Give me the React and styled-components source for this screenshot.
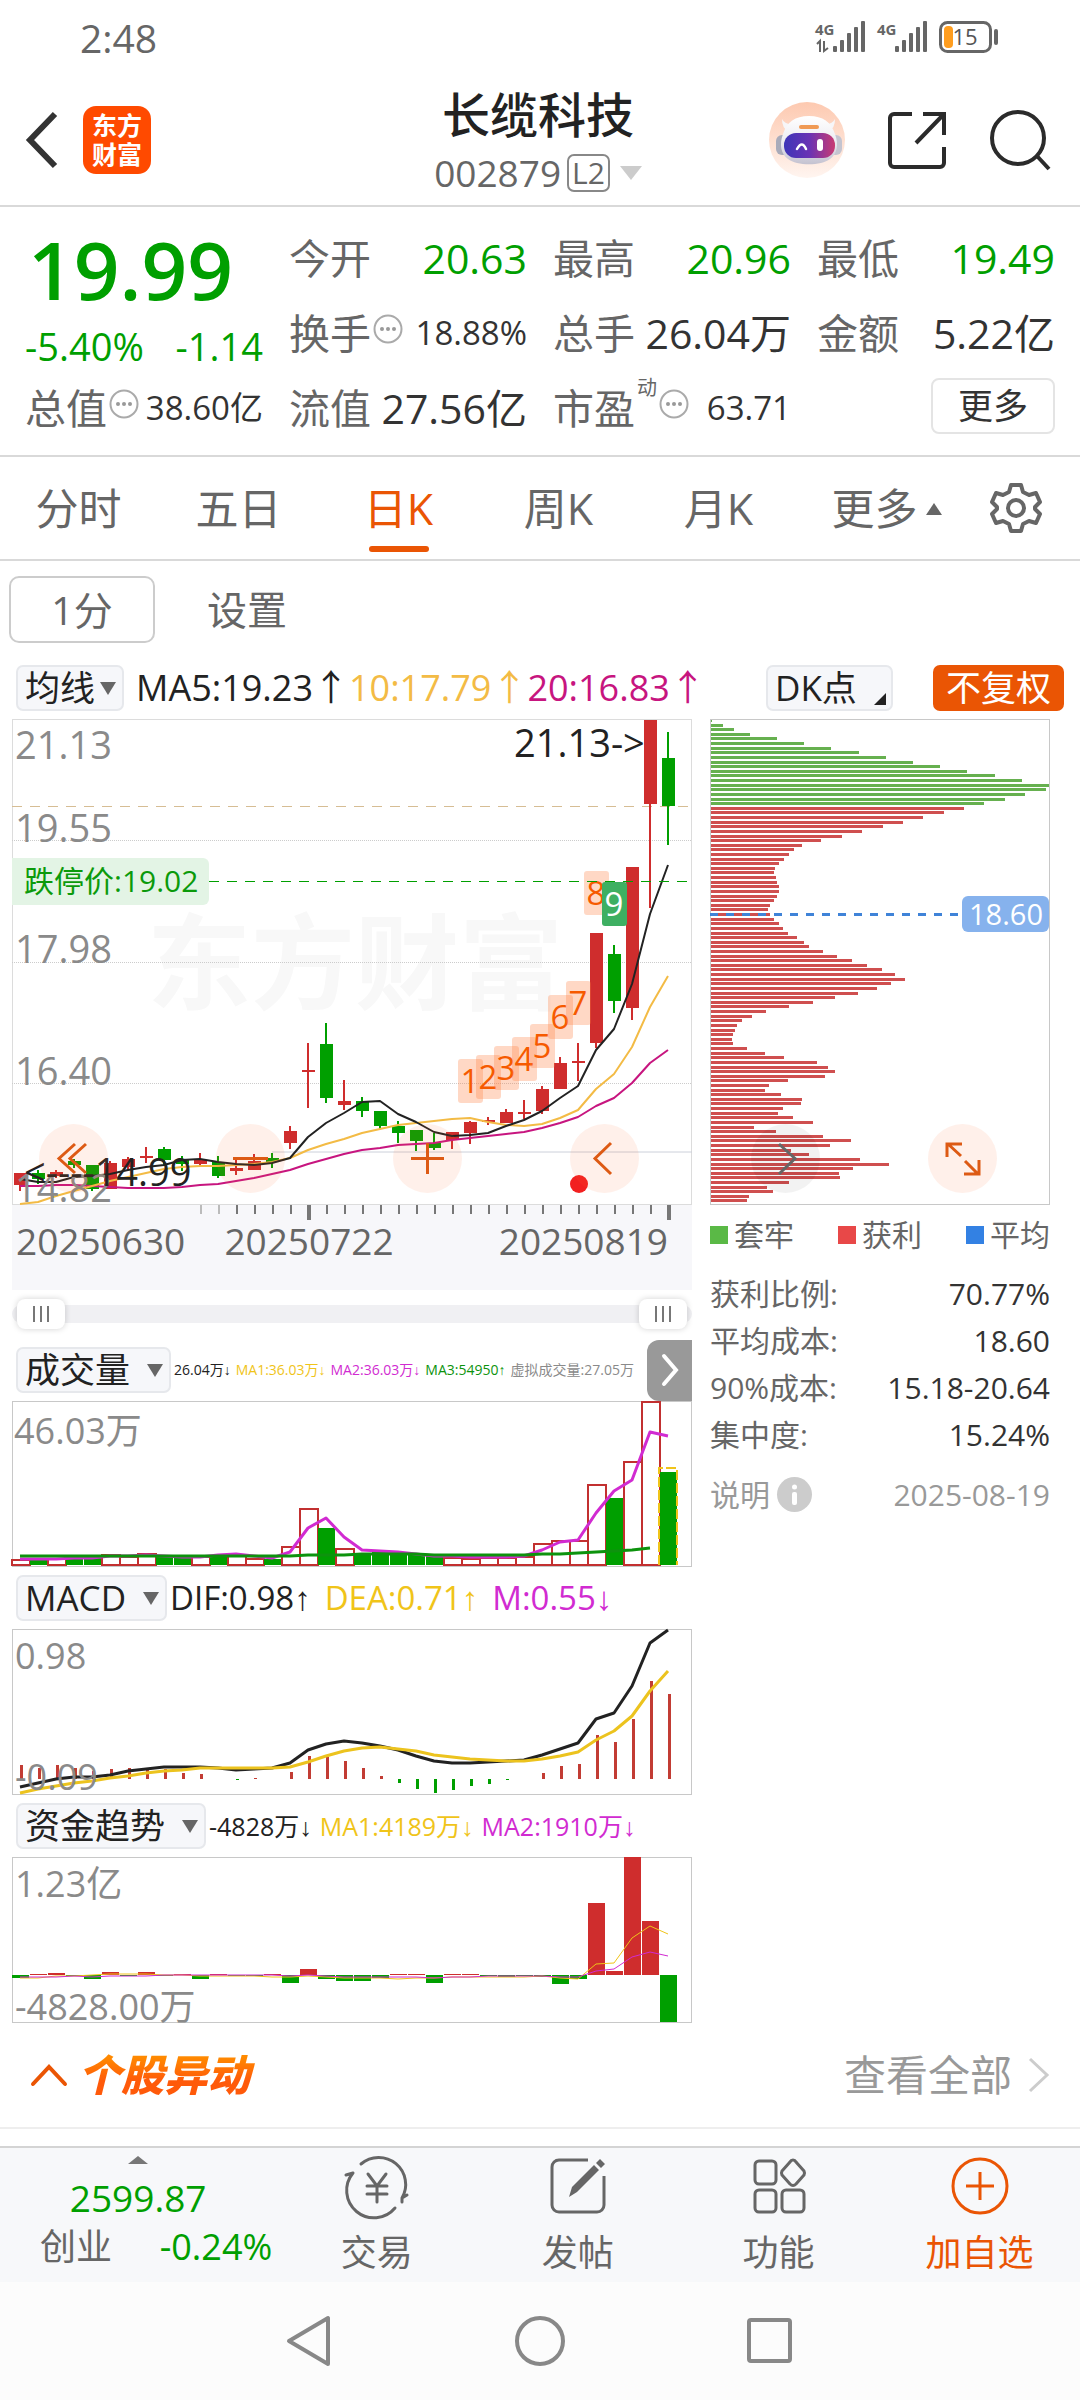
import { useState } from "react";
import styled, { createGlobalStyle } from "styled-components";

const RED = "#cf2d2d";
const GREEN = "#009f00";
const ORANGE = "#ea5504";
const YELLOW = "#f0c419";
const PURPLE = "#d12bd1";

const FONT = `"Open Sans", "Noto Sans CJK SC", sans-serif`;
const VALUE_FONT = `"Open Sans", "Liberation Sans", "Noto Sans CJK SC", sans-serif`;

const STEP = 18;
const centerOf = (i) => 8 + i * STEP;

// color, high, body top, body bottom, low
const candles = [
  ["r", 454, 454, 466, 472],
  ["g", 451, 454, 460, 465],
  ["r", 451, 453, 457, 459],
  ["g", 440, 442, 446, 449],
  ["g", 446, 446, 470, 472],
  ["r", 442, 444, 470, 470],
  ["r", 438, 440, 448, 451],
  ["r", 428, 437, 439, 444],
  ["g", 428, 430, 441, 447],
  ["g", 437, 441, 445, 452],
  ["r", 434, 441, 445, 447],
  ["g", 437, 443, 457, 459],
  ["r", 438, 449, 452, 456],
  ["r", 435, 442, 451, 451],
  ["g", 434, 439, 443, 449],
  ["r", 407, 412, 424, 430],
  ["r", 324, 351, 353, 389],
  ["g", 304, 325, 379, 384],
  ["r", 361, 382, 386, 391],
  ["g", 378, 382, 392, 398],
  ["g", 392, 392, 407, 410],
  ["g", 402, 407, 414, 424],
  ["g", 411, 411, 422, 432],
  ["g", 414, 424, 429, 431],
  ["r", 413, 413, 421, 430],
  ["r", 402, 403, 414, 425],
  ["r", 398, 401, 403, 406],
  ["r", 390, 393, 404, 404],
  ["r", 381, 393, 395, 400],
  ["r", 367, 370, 392, 395],
  ["r", 338, 344, 370, 370],
  ["r", 324, 342, 344, 362],
  ["r", 214, 214, 324, 329],
  ["g", 226, 235, 282, 294],
  ["r", 148, 148, 289, 301],
  ["r", 1, 1, 85, 189],
  ["g", 13, 39, 87, 126],
];

const ma5 = [
  460, 463, 463, 458, 457, 455, 451, 448, 446, 441, 440, 443, 445, 446, 444,
  439, 418, 404, 394, 383, 382, 395, 403, 413, 417, 416, 414, 407, 401, 392,
  379, 367, 331, 310, 265, 195, 146,
];
const ma10 = [
  485, 483, 477, 472, 467, 462, 458, 454, 450, 448, 447, 447, 446, 445, 443,
  439, 431, 425, 420, 414, 410, 406, 404, 402, 400, 399, 403, 406, 407, 405,
  399, 391, 370, 355, 328, 288, 257,
];
const ma20 = [
  467, 467, 466, 466, 467, 468, 469, 469, 469, 468, 466, 465, 462, 459, 455,
  451, 445, 440, 435, 431, 429, 426, 425, 424, 421, 419, 417, 415, 413, 409,
  404, 398, 387, 379, 364, 344, 331,
];

const tagTops = [340, 336, 327, 318, 305, 276, 262, 152, 163];

const volTops = [
  158, 158, 157, 156, 157, 153, 155, 152, 156, 157, 155, 155, 153, 157, 158,
  145, 107, 127, 147, 152, 150, 152, 154, 155, 156, 157, 156, 156, 155, 142,
  139, 139, 83, 97, 60, 0, 71,
];
const volMa = [
  158, 158, 158, 157, 157, 155, 155, 154, 155, 156, 156, 154, 153, 155, 157,
  151, 127, 117, 136, 149, 150, 151, 153, 155, 155, 156, 156, 156, 155, 149,
  141, 139, 112, 90, 79, 31, 35,
];
const volLong = [
  155, 155, 155, 155, 155, 155, 155, 155, 155, 155, 155, 155, 155, 155, 155,
  155, 154, 154, 154, 153, 153, 153, 153, 154, 154, 154, 154, 154, 154, 153,
  153, 152, 151, 150, 149, 147, 145,
];

const macdEnds = [
  136, 139, 136, 139, 142, 140, 139, 139, 140, 144, 145, 150, 151, 149, 150,
  143, 127, 128, 132, 139, 147, 154, 160, 164, 161, 157, 155, 151, 150, 144,
  137, 135, 106, 113, 90, 52, 65,
];
const dif = [
  158, 154, 150, 148, 148, 146, 142, 140, 138, 138, 138, 139, 141, 140, 139,
  134, 121, 115, 112, 114, 117, 121, 127, 132, 134, 134, 133, 132, 131, 126,
  120, 114, 90, 84, 57, 14, 1,
];
const dea = [
  164, 160, 157, 154, 152, 149, 147, 144, 142, 141, 139, 139, 139, 139, 139,
  138, 133, 127, 122, 119, 118, 120, 122, 126, 128, 130, 131, 132, 132, 130,
  127, 123, 111, 102, 87, 62, 42,
];

const fundEnds = [
  121, 117, 116, 119, 122, 115, 119, 115, 119, 117, 122, 117, 119, 119, 117,
  126, 112, 122, 124, 124, 121, 117, 117, 126, 117, 117, 119, 120, 119, 120,
  127, 122, 46, 114, 0, 64, 165,
];
const fundMa1 = [
  121, 121, 119, 119, 118, 117, 117, 117, 118, 118, 119, 119, 119, 119, 120,
  120, 119, 120, 121, 121, 121, 122, 121, 121, 120, 120, 120, 120, 120, 119,
  121, 122, 107, 106, 81, 69, 77,
];
const fundMa2 = [
  120, 120, 120, 119, 120, 119, 119, 119, 118, 118, 118, 118, 118, 118, 118,
  119, 118, 119, 120, 120, 120, 120, 120, 121, 120, 120, 119, 119, 119, 119,
  120, 120, 114, 112, 100, 95, 99,
];

// bar widths of the chip distribution, top price first
const chips = [
  2, 13, 24, 40, 67, 94, 121, 149, 176, 203, 230, 257, 285, 312, 339, 336, 315,
  295, 274, 254, 234, 213, 193, 173, 152, 132, 111, 92, 84, 79, 74, 69, 65, 64,
  66, 67, 69, 69, 67, 64, 60, 58, 60, 64, 69, 73, 78, 87, 94, 99, 113, 127, 142,
  157, 172, 185, 195, 181, 167, 148, 125, 103, 79, 56, 42, 32, 27, 25, 23, 22,
  23, 37, 55, 74, 107, 118, 125, 115, 78, 59, 55, 71, 92, 91, 73, 68, 83, 103,
  44, 66, 113, 141, 120, 81, 99, 150, 179, 143, 129, 130, 79, 57, 63, 39, 37,
];

const facts = [
  ["获利比例:", "70.77%"],
  ["平均成本:", "18.60"],
  ["90%成本:", "15.18-20.64"],
  ["集中度:", "15.24%"],
];

const toPoints = (ys) => ys.map((y, i) => `${centerOf(i)},${y}`).join(" ");

const Line = ({ ys, color, width = 2 }) => (
  <polyline
    points={toPoints(ys)}
    fill="none"
    stroke={color}
    strokeWidth={width}
    strokeLinejoin="round"
  />
);

const Frame = ({ height, color = "#c8c8c8" }) => (
  <rect
    x="0.5"
    y="0.5"
    width="679"
    height={height - 1}
    fill="none"
    stroke={color}
  />
);

const PriceChart = () => (
  <Plot viewBox="0 0 680 486" role="img" aria-label="日K">
    <text x="135" y="283" fontSize="104" fontWeight="700" fill="#f8f8f8">
      东方财富
    </text>
    <Frame height={486} color="#dcdcdc" />
    {[121, 243, 364].map((y) => (
      <line
        key={y}
        x2="680"
        y1={y + 0.5}
        y2={y + 0.5}
        stroke="#ccc"
        strokeDasharray="1 1"
      />
    ))}
    <line
      x2="680"
      y1="87.5"
      y2="87.5"
      stroke="#d6bd94"
      strokeDasharray="10 8"
    />
    <line x1="260" x2="680" y1="433" y2="433" stroke="#ccd0da" />
    {candles.map(([c, high, top, bottom, low], i) => {
      const x = centerOf(i);
      const color = c === "r" ? RED : GREEN;
      return (
        <g key={i} fill={color}>
          <rect x={x - 1} y={high} width="2" height={low - high} />
          <rect x={x - 6} y={top} width="13" height={bottom - top} />
        </g>
      );
    })}
    <Line ys={ma20} color="#c7157f" />
    <Line ys={ma10} color="#f3bb45" />
    <Line ys={ma5} color="#222" />
    {tagTops.map((y, i) => (
      <g key={i}>
        <rect
          x={446 + i * STEP}
          y={y}
          width="25"
          height="44"
          rx="3"
          fill={i === 8 ? "#3eaf62" : "#ff7f40"}
          fillOpacity={i === 8 ? 1 : 0.3}
        />
        <text
          x={458 + i * STEP}
          y={y + 34}
          fontSize="33"
          textAnchor="middle"
          fill={i === 8 ? "#fff" : "#f65a00"}
        >
          {i + 1}
        </text>
      </g>
    ))}
    <line
      x1="197"
      x2="675"
      y1="162.5"
      y2="162.5"
      stroke={GREEN}
      strokeDasharray="10 8"
    />
    <path d="M0 139h191a6 6 0 0 1 6 6v35a6 6 0 0 1-6 6H0z" fill="#e3f4e5" />
    <text x="12" y="173" fontSize="30" fill="#0b9a0b">
      跌停价:19.02
    </text>
    <g fontSize="38" fill="#8a8a8a">
      <text x="3" y="40">21.13</text>
      <text x="3" y="123">19.55</text>
      <text x="3" y="244">17.98</text>
      <text x="3" y="366">16.40</text>
      <text x="3" y="483">14.82</text>
    </g>
    <g fontSize="38" fill="#222">
      <text x="12" y="467">
        {"<----14.99"}
      </text>
      <text x="502" y="38">
        {"21.13->"}
      </text>
    </g>
    <circle cx="567" cy="465" r="9" fill="#f22020" />
  </Plot>
);

const DateAxis = () => (
  <AxisPlot viewBox="0 0 680 85">
    {Array.from({ length: 27 }, (_, k) => {
      const i = k + 10;
      const major = i === 16 || i === 36;
      return (
        <rect
          key={i}
          x={centerOf(i) + (major ? -1 : 0)}
          width={major ? 4 : 2}
          height={major ? 15 : 9}
          fill={i < 12 ? "#bbb" : "#777"}
        />
      );
    })}
    <g fontSize="37" fill="#666">
      <text x="4" y="50">20250630</text>
      <text x="297" y="50" textAnchor="middle">
        20250722
      </text>
      <text x="656" y="50" textAnchor="end">
        20250819
      </text>
    </g>
  </AxisPlot>
);

const VolumeChart = () => (
  <Plot viewBox="0 0 680 166" role="img" aria-label="成交量">
    <Frame height={166} />
    {volTops.map((y, i) => {
      const x = centerOf(i) - 8;
      return candles[i][0] === "g" ? (
        <rect key={i} x={x} y={y} width="17" height={164 - y} fill={GREEN} />
      ) : (
        <rect
          key={i}
          x={x}
          y={y + 1}
          width="18"
          height={163 - y}
          fill="#fff"
          stroke="#c23030"
          strokeWidth="2"
        />
      );
    })}
    <path
      d="M647 164V67h18v97"
      fill="none"
      stroke={YELLOW}
      strokeWidth="2"
      strokeDasharray="10 3"
    />
    <Line ys={volMa} color={PURPLE} width={3} />
    <Line ys={volLong.slice(0, 36)} color="#0d930d" width={3} />
    <text x="2" y="43" fontSize="36" fill="#8a8a8a">
      46.03万
    </text>
  </Plot>
);

const MacdChart = () => (
  <Plot viewBox="0 0 680 166" role="img" aria-label="MACD">
    <Frame height={166} />
    {macdEnds.map((y, i) => (
      <rect
        key={i}
        x={centerOf(i)}
        y={Math.min(y, 150)}
        width="3"
        height={Math.abs(150 - y)}
        fill={y > 150 ? GREEN : "#c23c34"}
      />
    ))}
    <Line ys={dif} color="#222" width={3} />
    <Line ys={dea} color="#ecc31e" width={3} />
    <g fontSize="36" fill="#8a8a8a">
      <text x="3" y="40">0.98</text>
      <text x="3" y="161">-0.09</text>
    </g>
  </Plot>
);

const FundChart = () => (
  <Plot viewBox="0 0 680 166" role="img" aria-label="资金趋势">
    <Frame height={166} />
    {fundEnds.map((y, i) => (
      <rect
        key={i}
        x={centerOf(i) - 8}
        y={Math.min(y, 118)}
        width="17"
        height={Math.abs(118 - y)}
        fill={y > 118 ? GREEN : RED}
      />
    ))}
    <Line ys={fundMa1} color="#f0c419" width={1} />
    <Line ys={fundMa2} color={PURPLE} width={1} />
    <g fontSize="36" fill="#8a8a8a">
      <text x="3" y="40">1.23亿</text>
      <text x="3" y="163">-4828.00万</text>
    </g>
  </Plot>
);

const ChipChart = () => (
  <Plot viewBox="0 0 340 486" role="img" aria-label="筹码分布">
    {chips.map((w, i) => (
      <rect
        key={i}
        y={Math.round(i * 4.62)}
        width={w}
        height="3"
        fill={i < 19 ? "#66b04f" : "#cf4f4f"}
      />
    ))}
    <rect
      x="0.5"
      y="0.5"
      width="339"
      height="485"
      fill="none"
      stroke="#c8c8c8"
    />
    <line
      x2="248"
      y1="195.5"
      y2="195.5"
      stroke="#3f83d8"
      strokeWidth="3"
      strokeDasharray="8 8"
    />
    <rect x="252" y="177" width="87" height="36" rx="6" fill="#86b2ed" />
    <text x="296" y="206" fontSize="29" textAnchor="middle" fill="#fff">
      18.60
    </text>
  </Plot>
);

const More = () => (
  <svg width="30" height="30" viewBox="0 0 30 30" aria-hidden="true">
    <circle
      cx="15"
      cy="15"
      r="13.5"
      fill="none"
      stroke="#aaa"
      strokeWidth="2"
    />
    <g fill="#999">
      <circle cx="9" cy="15" r="2" />
      <circle cx="15" cy="15" r="2" />
      <circle cx="21" cy="15" r="2" />
    </g>
  </svg>
);

const Robot = () => (
  <svg width="76" height="76" viewBox="0 0 76 76" aria-hidden="true">
    <defs>
      <linearGradient id="halo" x1="0" y1="0" x2="0" y2="1">
        <stop offset="0" stopColor="#fdc9b0" />
        <stop offset="1" stopColor="#fff5f0" />
      </linearGradient>
      <linearGradient id="visor" x1="0" y1="0" x2="1" y2="0">
        <stop offset="0" stopColor="#3d35b8" />
        <stop offset="0.5" stopColor="#6a33b4" />
        <stop offset="1" stopColor="#c93a72" />
      </linearGradient>
      <linearGradient id="shell" x1="0" y1="0" x2="0" y2="1">
        <stop offset="0" stopColor="#fff" />
        <stop offset="0.5" stopColor="#eeedf2" />
        <stop offset="1" stopColor="#c4c2d0" />
      </linearGradient>
    </defs>
    <circle cx="38" cy="38" r="38" fill="url(#halo)" />
    <rect x="7" y="33" width="13" height="20" rx="6" fill="#a9abba" />
    <rect x="60" y="33" width="13" height="20" rx="6" fill="#c4c4d0" />
    <path d="M13 17q0 9 6 12l5-7q-8 1-11-5z" fill="#f7f6f8" />
    <path d="M66 17q0 9-6 12l-5-7q8 1 11-5z" fill="#f7f6f8" />
    <path
      d="M40 14c14 0 22 6 26 18 4 11 2 20-5 25-9 7-33 7-42 0-7-5-9-14-5-25 4-12 12-18 26-18z"
      fill="url(#shell)"
    />
    <rect x="30" y="23" width="20" height="4" rx="2" fill="#f09a55" />
    <rect x="15" y="31" width="51" height="25" rx="12" fill="url(#visor)" />
    <path
      d="M28 47q5-9 9 0"
      fill="none"
      stroke="#fff"
      strokeWidth="2.5"
      strokeLinecap="round"
    />
    <rect x="48" y="37" width="6" height="12" rx="3" fill="#fff" />
  </svg>
);

const Signal = ({ data }) => (
  <svg width="52" height="34" viewBox="0 0 52 34" aria-hidden="true">
    <text x="0" y="15" fontSize="15" fontWeight="700" fill="#666">
      4G
    </text>
    {data && (
      <path
        d="M2 24l3-3v11M9 21v10l4-3"
        fill="none"
        stroke="#666"
        strokeWidth="2"
      />
    )}
    <g fill="#666">
      <rect x="18" y="26" width="4" height="6" rx="1" />
      <rect x="25" y="20" width="4" height="12" rx="1" />
      <rect x="32" y="13" width="4" height="19" rx="1" />
      <rect x="39" y="7" width="4" height="25" rx="1" />
      <rect x="46" y="1" width="4" height="31" rx="1" />
    </g>
  </svg>
);

const Battery = () => (
  <svg width="60" height="34" viewBox="0 0 60 34" aria-hidden="true">
    <rect
      x="1.5"
      y="2.5"
      width="50"
      height="29"
      rx="7"
      fill="none"
      stroke="#666"
      strokeWidth="3"
    />
    <rect x="5" y="6" width="9" height="22" rx="4" fill="#ff9d1e" />
    <rect x="55" y="9" width="4" height="16" rx="2" fill="#666" />
    <text x="26" y="25" fontSize="22" textAnchor="middle" fill="#555">
      15
    </text>
  </svg>
);

const Picker = ({ label, options, corner, tight }) => (
  <PickerBox $corner={corner} $tight={tight}>
    <select aria-label={label} defaultValue={options[0]}>
      {options.map((o) => (
        <option key={o}>{o}</option>
      ))}
    </select>
  </PickerBox>
);

const FloatIcon = ({ d }) => (
  <svg width="69" height="69" viewBox="0 0 69 69" aria-hidden="true">
    <path d={d} fill="none" stroke="currentColor" strokeWidth="3" />
  </svg>
);

const tabs = ["分时", "五日", "日K", "周K", "月K"];

const App = () => {
  const [tab, setTab] = useState("日K");
  return (
    <Page>
      <GlobalStyle />
      <StatusBar>
        <span>2:48</span>
        <StatusIcons>
          <Signal data />
          <Signal />
          <Battery />
        </StatusIcons>
      </StatusBar>

      <Header>
        <HeaderSide>
          <IconButton aria-label="返回">
            <svg width="36" height="60" viewBox="0 0 36 60">
              <path
                d="M30 4L5 30l25 26"
                fill="none"
                stroke="#333"
                strokeWidth="6"
              />
            </svg>
          </IconButton>
          <Logo href="#">
            <span>东方</span>
            <span>财富</span>
          </Logo>
        </HeaderSide>
        <Title>
          <h1>长缆科技</h1>
          <TitleSub>
            002879<Level>L2</Level>
            <Triangle $color="#ccc" $size={11} $down />
          </TitleSub>
        </Title>
        <HeaderSide $end>
          <IconButton aria-label="助手">
            <Robot />
          </IconButton>
          <IconButton aria-label="分享">
            <svg width="60" height="60" viewBox="0 0 60 60">
              <path
                d="M25 4H7a4 4 0 0 0-4 4v45a4 4 0 0 0 4 4h46a4 4 0 0 0 4-4V37M36 4h21v21M57 4L29 33"
                fill="none"
                stroke="#2b2b2b"
                strokeWidth="4"
              />
            </svg>
          </IconButton>
          <IconButton aria-label="搜索">
            <svg width="62" height="62" viewBox="0 0 62 62">
              <g fill="none" stroke="#2b2b2b" strokeWidth="4">
                <circle cx="29" cy="29" r="26" />
                <path d="M48 47l12 13" />
              </g>
            </svg>
          </IconButton>
        </HeaderSide>
      </Header>

      <Quote>
        <PriceBox>
          <Price>19.99</Price>
          <Change>
            <span>-5.40%</span>
            <span>-1.14</span>
          </Change>
        </PriceBox>
        <Cell $down>
          今开<b>20.63</b>
        </Cell>
        <Cell $down>
          最高<b>20.96</b>
        </Cell>
        <Cell $down>
          最低<b>19.49</b>
        </Cell>
        <Cell $small>
          换手
          <More />
          <b>18.88%</b>
        </Cell>
        <Cell>
          总手<b>26.04万</b>
        </Cell>
        <Cell>
          金额<b>5.22亿</b>
        </Cell>
        <Cell $small>
          总值
          <More />
          <b>38.60亿</b>
        </Cell>
        <Cell>
          流值<b>27.56亿</b>
        </Cell>
        <Cell $small>
          市盈<sup>动</sup>
          <More />
          <b>63.71</b>
        </Cell>
        <Cell>
          <MoreButton>更多</MoreButton>
        </Cell>
      </Quote>

      <Tabs>
        {tabs.map((t) => (
          <Tab key={t} $active={t === tab} onClick={() => setTab(t)}>
            {t}
          </Tab>
        ))}
        <Tab>
          更多
          <Triangle $color="#666" $size={8} />
        </Tab>
        <Tab aria-label="设置">
          <svg width="52" height="52" viewBox="0 0 52 52">
            <g fill="none" stroke="#666" strokeWidth="4">
              <path
                d="M21 3h10l2 7 6 3 7-2 4 9-5 5v2l5 5-4 9-7-2-6 3-2 7H21l-2-7-6-3-7 2-4-9 5-5v-2l-5-5 4-9 7 2 6-3z"
                strokeLinejoin="round"
              />
              <circle cx="26" cy="26" r="8" />
            </g>
          </svg>
        </Tab>
      </Tabs>

      <SubTabs>
        <Minute>1分</Minute>
        <PlainButton>设置</PlainButton>
      </SubTabs>

      <Averages>
        <Picker label="主图指标" options={["均线"]} tight />
        <AverageText>
          <Tint $color="#222">MA5:19.23↑</Tint>
          <Tint $color="#f3bb45">10:17.79↑</Tint>
          <Tint $color="#c7157f">20:16.83↑</Tint>
        </AverageText>
        <Picker label="DK点" options={["DK点"]} corner />
        <Adjust>不复权</Adjust>
      </Averages>

      <Main>
        <Column>
          <Overlaid>
            <PriceChart />
            <Floats $left="4%">
              <Float aria-label="最早">
                <FloatIcon d="M36 20L20 34.500l16 14.500M47 20L31 34.500l16 14.500" />
              </Float>
              <Float aria-label="缩小">
                <FloatIcon d="M17 34.500h35" />
              </Float>
              <Float aria-label="放大">
                <FloatIcon d="M18 34.500h33M34.500 19v31" />
              </Float>
              <Float aria-label="向左">
                <FloatIcon d="M41 19L25 34.500l16 15.500" />
              </Float>
            </Floats>
          </Overlaid>
          <DateAxis />
          <RangeBox>
            <Range
              type="range"
              min="0"
              max="100"
              defaultValue="0"
              aria-label="开始日期"
            />
            <Range
              type="range"
              min="0"
              max="100"
              defaultValue="100"
              aria-label="结束日期"
            />
          </RangeBox>

          <Indicator>
            <Picker label="指标一" options={["成交量"]} />
            <Values $size={14} $gap={5}>
              <Tint $color="#222">26.04万↓</Tint>
              <Tint $color={YELLOW}>MA1:36.03万↓</Tint>
              <Tint $color={PURPLE}>MA2:36.03万↓</Tint>
              <Tint $color="#0d930d">MA3:54950↑</Tint>
              <Tint $color="#8a8a8a">虚拟成交量:27.05万</Tint>
            </Values>
            <Expand aria-label="展开">
              <svg width="20" height="40" viewBox="0 0 20 40">
                <path
                  d="M4 6l12 14L4 34"
                  fill="none"
                  stroke="#fff"
                  strokeWidth="4"
                  strokeLinecap="round"
                />
              </svg>
            </Expand>
          </Indicator>
          <VolumeChart />

          <Indicator>
            <Picker label="指标二" options={["MACD"]} />
            <Values $size={33} $gap={14}>
              <Tint $color="#222">DIF:0.98↑</Tint>
              <Tint $color={YELLOW}>DEA:0.71↑</Tint>
              <Tint $color={PURPLE}>M:0.55↓</Tint>
            </Values>
          </Indicator>
          <MacdChart />

          <Indicator>
            <Picker label="指标三" options={["资金趋势"]} />
            <Values $size={25} $gap={8}>
              <Tint $color="#222">-4828万↓</Tint>
              <Tint $color={YELLOW}>MA1:4189万↓</Tint>
              <Tint $color={PURPLE}>MA2:1910万↓</Tint>
            </Values>
          </Indicator>
          <FundChart />
        </Column>

        <Column>
          <Overlaid>
            <ChipChart />
            <Floats $left="12%">
              <Float $grey aria-label="向右">
                <FloatIcon d="M28 20l16 14.500L28 50" />
              </Float>
              <Float aria-label="全屏">
                <FloatIcon d="M19 33V20h15M20 20l13 12M37 37l13 13M51 36v14H36" />
              </Float>
            </Floats>
          </Overlaid>
          <Legend>
            <Key $color="#5ab946">套牢</Key>
            <Key $color="#e84848">获利</Key>
            <Key $color="#3381e3">平均</Key>
          </Legend>
          <Facts>
            <tbody>
              {facts.map(([name, value]) => (
                <tr key={name}>
                  <th scope="row">{name}</th>
                  <td>{value}</td>
                </tr>
              ))}
            </tbody>
          </Facts>
          <Note>
            说明
            <Info aria-label="说明">
              <svg width="35" height="35" viewBox="0 0 35 35">
                <circle cx="17.500" cy="17.500" r="17.500" fill="#ccc" />
                <circle cx="17.500" cy="10" r="2.500" fill="#fff" />
                <rect x="15" y="15" width="5" height="13" rx="2" fill="#fff" />
              </svg>
            </Info>
            <time>2025-08-19</time>
          </Note>
        </Column>
      </Main>

      <Moves>
        <svg width="38" height="26" viewBox="0 0 38 26" aria-hidden="true">
          <path
            d="M3 22L19 5l16 17"
            fill="none"
            stroke={ORANGE}
            strokeWidth="4"
            strokeLinecap="round"
          />
        </svg>
        <h2>个股异动</h2>
        <a href="#">
          查看全部
          <svg width="22" height="36" viewBox="0 0 22 36" aria-hidden="true">
            <path
              d="M2 2l17 16L2 34"
              fill="none"
              stroke="#ccc"
              strokeWidth="3"
            />
          </svg>
        </a>
      </Moves>

      <BottomBar>
        <IndexBox>
          <Triangle $color="#777" $size={10} $flat />
          <strong>2599.87</strong>
          <p>
            <span>创业</span>
            <em>-0.24%</em>
          </p>
        </IndexBox>
        <Action>
          <svg width="66" height="60" viewBox="0 0 66 60">
            <g fill="none" stroke="#666" strokeWidth="3" strokeLinecap="round">
              <path d="M17 8a27 27 0 0 1 41 34M51 52A27 27 0 0 1 9 17M9 17l-7 2M58 42l5-3M58 42v4" />
              <path d="M24 18l9 12 9-12M33 30v16M23 30h20M23 38h20" />
            </g>
          </svg>
          交易
        </Action>
        <Action>
          <svg width="60" height="60" viewBox="0 0 60 60">
            <path
              d="M40 4H11a7 7 0 0 0-7 7v38a7 7 0 0 0 7 7h38a7 7 0 0 0 7-7V20"
              fill="none"
              stroke="#666"
              strokeWidth="3"
            />
            <path
              d="M21 41l3-10 22-22 5 5-22 22zM48 7l4-4 5 5-4 4z"
              fill="#666"
            />
          </svg>
          发帖
        </Action>
        <Action>
          <svg width="60" height="60" viewBox="0 0 60 60">
            <g fill="none" stroke="#666" strokeWidth="3">
              <rect x="6" y="5" width="21" height="23" rx="4" />
              <rect x="6" y="34" width="21" height="22" rx="4" />
              <rect x="33" y="34" width="22" height="22" rx="4" />
              <path
                d="M44 4q2 0 3 2l8 9q1 2 0 4l-8 9q-3 3-6 0l-8-9q-1-2 0-4l8-9q1-2 3-2z"
                strokeLinejoin="round"
              />
            </g>
          </svg>
          功能
        </Action>
        <Action $accent>
          <svg width="60" height="60" viewBox="0 0 60 60">
            <g fill="none" stroke={ORANGE} strokeWidth="3">
              <circle cx="30" cy="30" r="27" />
              <path d="M16 30h28M30 16v28" />
            </g>
          </svg>
          加自选
        </Action>
      </BottomBar>

      <SystemNav>
        <IconButton aria-label="后退">
          <svg width="50" height="54" viewBox="0 0 50 54">
            <path
              d="M42 4v46L3 27z"
              fill="none"
              stroke="#888"
              strokeWidth="4"
              strokeLinejoin="round"
            />
          </svg>
        </IconButton>
        <IconButton aria-label="主页">
          <svg width="50" height="54" viewBox="0 0 50 54">
            <circle
              cx="25"
              cy="27"
              r="23"
              fill="none"
              stroke="#888"
              strokeWidth="4"
            />
          </svg>
        </IconButton>
        <IconButton aria-label="最近任务">
          <svg width="50" height="54" viewBox="0 0 50 54">
            <rect
              x="5"
              y="6"
              width="41"
              height="41"
              rx="2"
              fill="none"
              stroke="#888"
              strokeWidth="4"
            />
          </svg>
        </IconButton>
      </SystemNav>
    </Page>
  );
};

export default App;

const GlobalStyle = createGlobalStyle`
  * {
    box-sizing: border-box;
  }
  body {
    margin: 0;
    background: #fff;
    font-family: ${FONT};
  }
  h1, h2, p {
    margin: 0;
  }
  svg {
    display: block;
    flex-shrink: 0;
    overflow: visible;
  }
  button, select {
    font-family: inherit;
    padding: 0;
    border: 0;
    background: none;
    color: inherit;
    cursor: pointer;
  }
  a {
    color: inherit;
    text-decoration: none;
  }
`;

const Page = styled.div`
  display: flex;
  flex-direction: column;
  color: #666;
`;

const StatusBar = styled.div`
  display: flex;
  align-items: center;
  justify-content: space-between;
  height: 74px;
  padding: 0 81px 0 80px;
  font-size: 39px;
`;

const StatusIcons = styled.div`
  display: flex;
  align-items: center;
  gap: 10px;
`;

const Header = styled.header`
  display: grid;
  grid-template-columns: 1fr auto 1fr;
  align-items: center;
  height: 133px;
  padding: 0 29px 0 25px;
  border-bottom: 2px solid #d9d9d9;
`;

const HeaderSide = styled.div`
  display: flex;
  align-items: center;
  gap: ${({ $end }) => ($end ? "42px" : "22px")};
  justify-content: ${({ $end }) => ($end ? "flex-end" : "flex-start")};
`;

const IconButton = styled.button`
  display: flex;
  align-items: center;
  justify-content: center;
`;

const Logo = styled.a`
  display: flex;
  flex-direction: column;
  align-items: center;
  justify-content: center;
  width: 68px;
  height: 68px;
  border-radius: 13px;
  background: #ff4a00;
  color: #fff;
  font-size: 25px;
  font-weight: 700;
  line-height: 29px;
`;

const Title = styled.div`
  display: flex;
  flex-direction: column;
  align-items: center;
  gap: 12px;
  h1 {
    font-size: 48px;
    font-weight: 500;
    line-height: 54px;
    color: #222;
  }
`;

const TitleSub = styled.div`
  display: flex;
  align-items: center;
  font-size: 37px;
  line-height: 38px;
`;

const Level = styled.span`
  margin: 0 10px 0 6px;
  padding: 0 3px;
  border: 2px solid #888;
  border-radius: 7px;
  font-size: 30px;
  line-height: 34px;
`;

const Triangle = styled.i`
  width: 0;
  height: 0;
  border: ${({ $size }) => $size}px solid transparent;
  ${({ $down, $size, $color }) =>
    $down
      ? `border-top: ${$size + 3}px solid ${$color}; border-bottom: 0;`
      : `border-bottom: ${$size + 4}px solid ${$color}; border-top: 0;`}
  ${({ $flat }) => $flat && "border-bottom-width: 8px;"}
`;

const Quote = styled.section`
  display: grid;
  grid-template-columns: repeat(4, 1fr);
  grid-auto-rows: 75px;
  column-gap: 26px;
  padding: 13px 25px 10px;
  border-bottom: 2px solid #d9d9d9;
`;

const PriceBox = styled.div`
  grid-row: span 2;
  color: ${GREEN};
`;

const Price = styled.div`
  padding-left: 3px;
  font-size: 80px;
  font-weight: 600;
  line-height: 98px;
`;

const Change = styled.div`
  display: flex;
  justify-content: space-between;
  font-size: 38px;
  line-height: 56px;
`;

const Cell = styled.div`
  display: flex;
  align-items: center;
  font-size: 41px;
  line-height: 60px;
  white-space: nowrap;
  svg {
    margin: 0 0 8px 2px;
  }
  sup {
    align-self: flex-start;
    margin-left: 2px;
    font-size: 20px;
    line-height: 36px;
  }
  b {
    margin-left: auto;
    font-weight: 400;
    font-size: ${({ $small }) => ($small ? "33px" : "41px")};
    color: ${({ $down }) => ($down ? GREEN : "#333")};
  }
`;

const MoreButton = styled.button`
  width: 124px;
  height: 56px;
  margin: 0 0 4px auto;
  border: 2px solid #e4e4e4;
  border-radius: 8px;
  font-size: 35px;
  line-height: 50px;
  color: #333;
`;

const Tabs = styled.nav`
  display: grid;
  grid-template-columns: repeat(5, 10fr) 11fr 5fr;
  height: 104px;
  padding-right: 24px;
  border-bottom: 2px solid #d9d9d9;
`;

const Tab = styled.button`
  position: relative;
  display: flex;
  align-items: center;
  justify-content: center;
  gap: 8px;
  padding: 2px 3px 0 0;
  font-size: 43px;
  line-height: 60px;
  color: ${({ $active }) => ($active ? ORANGE : "#666")};
  &::after {
    content: "";
    display: ${({ $active }) => ($active ? "block" : "none")};
    position: absolute;
    bottom: 7px;
    width: 60px;
    height: 6px;
    border-radius: 3px;
    background: ${ORANGE};
  }
  &:last-child {
    padding: 0;
  }
`;

const SubTabs = styled.div`
  display: flex;
  align-items: center;
  gap: 52px;
  padding: 15px 9px 0;
`;

const Minute = styled.button`
  width: 146px;
  height: 67px;
  border: 2px solid #ccc;
  border-radius: 10px;
  font-size: 39px;
  line-height: 60px;
`;

const PlainButton = styled.button`
  font-size: 40px;
  line-height: 60px;
`;

const Averages = styled.div`
  display: flex;
  align-items: center;
  padding: 22px 16px 8px;
`;

const AverageText = styled.div`
  display: flex;
  flex: 1;
  padding-left: 12px;
  font-size: 36px;
  line-height: 46px;
  white-space: nowrap;
`;

const Tint = styled.span`
  color: ${({ $color }) => $color};
`;

const PickerBox = styled.div`
  position: relative;
  flex-shrink: 0;
  border: 2px solid #e6e8ec;
  border-radius: 7px;
  background: #f6f7fa;
  select {
    display: block;
    appearance: none;
    height: 42px;
    padding: 0 ${({ $corner, $tight }) => ($corner ? 34 : $tight ? 26 : 38)}px 0
      7px;
    font-size: 35px;
    line-height: 42px;
    color: #222;
  }
  &::after {
    content: "";
    position: absolute;
    right: 6px;
    ${({ $corner }) =>
      $corner
        ? `bottom: 4px; right: 5px; border-left: 12px solid transparent; border-bottom: 12px solid #222;`
        : `top: 15px; border: 8px solid transparent; border-top: 13px solid #666; border-bottom: 0;`}
    pointer-events: none;
  }
`;

const Adjust = styled.button`
  height: 46px;
  margin-left: 40px;
  padding: 0 13px;
  border-radius: 7px;
  background: ${ORANGE};
  color: #fff;
  font-size: 35px;
  line-height: 46px;
`;

const Main = styled.main`
  display: grid;
  grid-template-columns: 2fr 1fr;
  gap: 18px;
  align-items: start;
  padding: 0 30px 0 12px;
`;

const Column = styled.div`
  display: flex;
  flex-direction: column;
  min-width: 0;
`;

const Plot = styled.svg`
  width: 100%;
  height: auto;
  font-family: ${FONT};
`;

const AxisPlot = styled(Plot)`
  background: #f7f7fa;
`;

const Overlaid = styled.div`
  position: relative;
`;

const Floats = styled.div`
  position: absolute;
  left: ${({ $left }) => $left};
  bottom: 12px;
  display: flex;
  gap: 108px;
`;

const Float = styled.button`
  border-radius: 50%;
  background: ${({ $grey }) =>
    $grey ? "rgba(0, 0, 0, 0.05)" : "rgba(255, 110, 50, 0.1)"};
  color: ${({ $grey }) => ($grey ? "#666" : "#dd5a14")};
`;

const RangeBox = styled.div`
  position: relative;
  height: 18px;
  margin: 15px 0 16px;
  border-radius: 9px;
  background: #f0f0f3;
`;

const Range = styled.input`
  position: absolute;
  inset: -6px 5px;
  width: calc(100% - 10px);
  height: 30px;
  margin: 0;
  appearance: none;
  background: none;
  pointer-events: none;
  &::-webkit-slider-thumb {
    appearance: none;
    width: 48px;
    height: 30px;
    border-radius: 8px;
    background:
      linear-gradient(#777, #777) 16px 50% / 2px 16px no-repeat,
      linear-gradient(#777, #777) 23px 50% / 2px 16px no-repeat,
      linear-gradient(#777, #777) 30px 50% / 2px 16px no-repeat,
      #fff;
    box-shadow: 0 0 6px rgba(0, 0, 0, 0.18);
    pointer-events: auto;
  }
`;

const Indicator = styled.div`
  display: flex;
  align-items: center;
  height: 62px;
  padding-left: 4px;
`;

const Values = styled.div`
  display: flex;
  flex: 1;
  min-width: 0;
  gap: ${({ $gap }) => $gap}px;
  padding-left: 3px;
  font-family: ${VALUE_FONT};
  font-size: ${({ $size }) => $size}px;
  line-height: 46px;
  white-space: nowrap;
`;

const Expand = styled.button`
  display: flex;
  flex-shrink: 0;
  align-items: center;
  justify-content: center;
  width: 45px;
  height: 61px;
  border-radius: 12px 0 0 12px;
  background: #999;
`;

const Legend = styled.div`
  display: flex;
  justify-content: space-between;
  padding: 10px 0;
  font-size: 30px;
  line-height: 40px;
`;

const Key = styled.span`
  display: flex;
  align-items: center;
  gap: 6px;
  &::before {
    content: "";
    width: 18px;
    height: 18px;
    background: ${({ $color }) => $color};
  }
`;

const Facts = styled.table`
  width: 100%;
  margin-top: 5px;
  border-collapse: collapse;
  font-size: 30px;
  line-height: 47px;
  white-space: nowrap;
  th,
  td {
    padding: 0;
    font-weight: 400;
    text-align: left;
  }
  td {
    text-align: right;
    color: #333;
  }
`;

const Note = styled.div`
  display: flex;
  align-items: center;
  margin-top: 13px;
  font-size: 30px;
  line-height: 47px;
  color: #999;
  time {
    margin-left: auto;
  }
`;

const Info = styled.button`
  margin-left: 7px;
`;

const Moves = styled.section`
  display: flex;
  align-items: center;
  height: 106px;
  padding: 0 30px;
  border-bottom: 2px solid #eee;
  h2 {
    padding: 0 6px 0 10px;
    font-size: 43px;
    font-weight: 900;
    font-style: italic;
    line-height: 60px;
    background: linear-gradient(#ff8a00 20%, #ff5a0a 60%);
    background-clip: text;
    color: transparent;
  }
  a {
    display: flex;
    align-items: center;
    gap: 16px;
    margin-left: auto;
    font-size: 42px;
    line-height: 60px;
    color: #999;
  }
`;

const BottomBar = styled.nav`
  display: grid;
  grid-template-columns: 11fr repeat(4, 8fr);
  height: 136px;
  margin-top: 17px;
  border-top: 2px solid #d4d4d4;
  background: #f7f8fa;
`;

const IndexBox = styled.div`
  display: flex;
  flex-direction: column;
  align-items: center;
  padding-top: 8px;
  strong {
    margin-top: 8px;
    font-size: 37px;
    font-weight: 400;
    line-height: 52px;
    color: ${GREEN};
  }
  p {
    display: flex;
    align-self: stretch;
    justify-content: space-between;
    padding: 0 4px 0 40px;
    font-size: 36px;
    line-height: 46px;
  }
  em {
    font-style: normal;
    color: ${GREEN};
  }
`;

const Action = styled.button`
  display: flex;
  flex-direction: column;
  align-items: center;
  padding-top: 8px;
  gap: 13px;
  font-size: 36px;
  line-height: 48px;
  color: ${({ $accent }) => ($accent ? ORANGE : "#666")};
`;

const SystemNav = styled.div`
  display: flex;
  justify-content: center;
  gap: 179px;
  height: 118px;
  background: #fcfcfc;
`;
